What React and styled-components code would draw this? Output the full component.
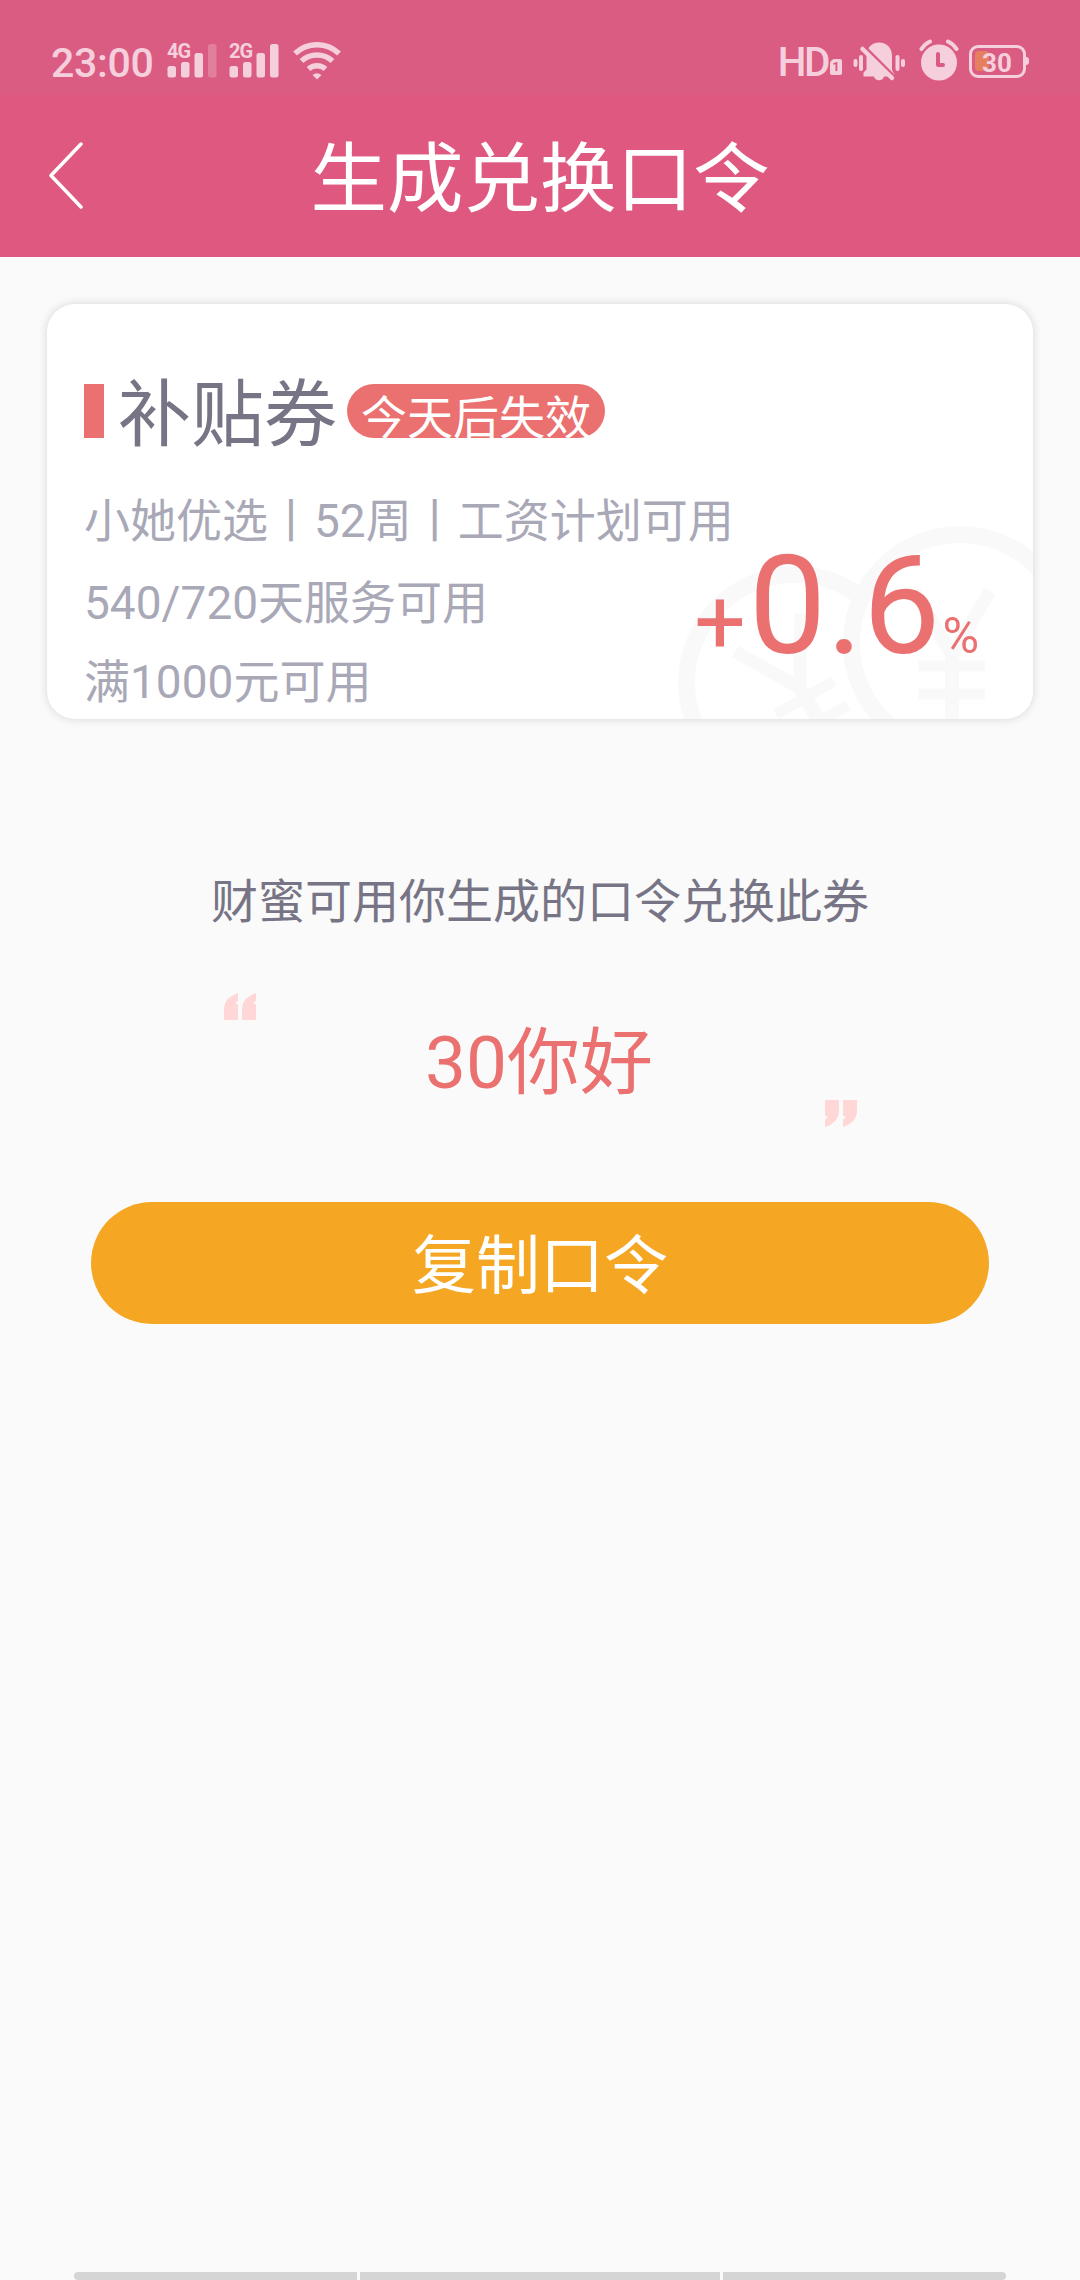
import React from 'react'

import styled, { createGlobalStyle } from 'styled-components'

const GlobalStyle = createGlobalStyle`
*{
    box-sizing:border-box;
}
body{
    margin:0;
    background:#fafafa;
    font-family:Roboto,"Noto Sans CJK SC",sans-serif;
}
`

const Signal = ({ label, weak }) => (
    <SignalBox>
        <svg width="48" height="36" viewBox="0 0 48 36" fill="#f6cfdd">
            <rect x="0.500" y="24" width="8.500" height="11.500" rx="2.500" />
            <rect x="14" y="20" width="8.500" height="15.500" rx="2.500" />
            <rect x="27.500" y="11" width="8.500" height="24.500" rx="2.500" />
            <rect x="41" y="2" width="8.500" height="33.500" rx="2.500" opacity={weak ? 0.3 : 1} />
        </svg>
        <SignalLabel>{label}</SignalLabel>
    </SignalBox>
)

const Wifi = () => (
    <svg width="48" height="38" viewBox="0 0 48 38" fill="none" stroke="#f6cfdd" strokeWidth="5.500">
        <path d="M2 11.500a32 32 0 0 1 44 0" />
        <path d="M8.500 19a23 23 0 0 1 31 0" />
        <path d="M15.500 27a13 13 0 0 1 17 0" />
        <path d="M19.500 33q4.500-3.500 9 0L24 37.500z" fill="#f6cfdd" stroke="none" />
    </svg>
)

const Muted = () => (
    <svg width="54" height="40" viewBox="0 0 54 40">
        <g fill="#f6cfdd">
            <path d="M27 0.500c8 0 13 5.500 13 13.500v14l3.500 6.500H32a5.200 5.200 0 0 1-10 0H11.500v-4l3-3V14c0-8 5-13.500 12.500-13.500z" />
            <rect x="1.500" y="17" width="4" height="8" rx="2" />
            <rect x="7" y="13" width="4" height="16" rx="2" />
            <rect x="43.500" y="13" width="4" height="16" rx="2" />
            <rect x="49" y="17" width="4" height="8" rx="2" />
        </g>
        <path d="M11 1v5l30 30h5z" fill="#da5c82" />
        <path d="M10.500 7l29.500 29" stroke="#f6cfdd" strokeWidth="4.500" strokeLinecap="round" />
    </svg>
)

const Alarm = () => (
    <svg width="42" height="42" viewBox="0 0 42 42" fill="none" strokeLinecap="round">
        <circle cx="21" cy="23.500" r="18" fill="#f6cfdd" />
        <path d="M20 15v11h5" stroke="#da5c82" strokeWidth="4" strokeLinejoin="round" />
        <path d="M3.500 10q3-5 8.500-7.500M38.500 10q-3-5-8.500-7.500" stroke="#f6cfdd" strokeWidth="4" />
    </svg>
)

// yen sign, drawn around the point where its arms meet
const Yen = () => (
    <>
        <path d="M-38-64L0 0L38-64" strokeWidth="13" />
        <path d="M0-4v80" strokeWidth="14" />
        <path d="M-34 11h67M-34 39h67" strokeWidth="11" />
    </>
)

const Coins = () => (
    <CoinArt width="360" height="200" viewBox="673 519 360 200" fill="none" stroke="#f9f9f9">
        <circle cx="795" cy="683" r="108.500" strokeWidth="17" />
        <g transform="translate(800 688) rotate(-30)">
            <Yen />
        </g>
        <circle cx="960" cy="643" r="108.500" strokeWidth="17" fill="#fff" />
        <g transform="translate(952 655)">
            <Yen />
        </g>
    </CoinArt>
)

const Quote = () => (
    <svg width="33" height="27" viewBox="0 0 33 27" fill="#ffd7d7">
        <path d="M0 27V15Q1 4 14 0v8q-3 1-2 3h2v16z" />
        <path d="M18 27V15Q19 4 32 0v8q-3 1-2 3h2v16z" />
    </svg>
)

const App = () => {
    return (
        <Page>
            <GlobalStyle />
            <StatusBar>
                <Time>23:00</Time>
                <Signal label="4G" weak />
                <Signal label="2G" />
                <Wifi />
                <Spacer />
                <Hd>HD</Hd>
                <Sim>1</Sim>
                <Muted />
                <AlarmBox><Alarm /></AlarmBox>
                <Battery>
                    <Charge />
                    <BatteryText>30</BatteryText>
                </Battery>
                <BatteryTip />
            </StatusBar>
            <Header>
                <Back>
                    <svg width="36" height="68" viewBox="0 0 36 68" fill="none" stroke="#fff" strokeWidth="3.500" strokeLinecap="round" strokeLinejoin="round">
                        <path d="M33 2L3 33.500L33 65" />
                    </svg>
                </Back>
                <Title>生成兑换口令</Title>
            </Header>
            <Card>
                <Coins />
                <CardHead>
                    <Marker />
                    <Name>补贴券</Name>
                    <Badge>今天后失效</Badge>
                </CardHead>
                <CardBody>
                    <Rules>
                        <Rule $h={82}>小她优选丨52周丨工资计划可用</Rule>
                        <Rule $h={82}>540/720天服务可用</Rule>
                        <Rule $h={76}>满1000元可用</Rule>
                    </Rules>
                    <Rate>
                        <Plus>+</Plus>
                        <Value>0.6</Value>
                        <Percent>%</Percent>
                    </Rate>
                </CardBody>
            </Card>
            <Hint>财蜜可用你生成的口令兑换此券</Hint>
            <CodeBox>
                <QuoteRow><Quote /></QuoteRow>
                <Code>30你好</Code>
                <QuoteRow $end><Quote /></QuoteRow>
            </CodeBox>
            <CopyButton>复制口令</CopyButton>
            <NavBar>
                <NavItem $w={283} />
                <NavItem $w={360} />
                <NavItem $w={283} />
            </NavBar>
        </Page>
    )
}

const Page = styled.div`
width:1080px;
height:2280px;
display:flex;
flex-direction:column;
align-items:center;
overflow:hidden;
background:#fafafa;
`
const StatusBar = styled.div`
width:100%;
height:95px;
display:flex;
align-items:flex-start;
padding:42px 51px 0 51px;
background:#da5c82;
color:#f6cfdd;
`
const Time = styled.span`
width:116px;
font-size:41px;
line-height:42px;
font-weight:500;
letter-spacing:-.3px;
`
const SignalBox = styled.div`
position:relative;
width:62px;
height:36px;
svg{
    display:block;
    overflow:visible;
}
&+svg{
    margin-left:2px;
}
`
const SignalLabel = styled.span`
position:absolute;
left:0;
top:1px;
font-size:20px;
line-height:16px;
font-weight:700;
letter-spacing:-1px;
`
const Spacer = styled.div`
flex:1;
`
const Hd = styled.span`
font-size:40.500px;
line-height:41px;
letter-spacing:-2.500px;
font-weight:500;
`
const Sim = styled.span`
width:12px;
height:16px;
margin:17px 10px 0 2px;
border-radius:5px 2px 2px 2px;
background:#f6cfdd;
color:#da5c82;
font-size:13px;
line-height:16px;
font-weight:700;
text-align:center;
`
const AlarmBox = styled.div`
margin:-3px 9px 0 12px;
`
const Battery = styled.div`
position:relative;
width:57px;
height:33px;
margin-top:3px;
border:3px solid #f6cfdd;
border-radius:9px;
`
const Charge = styled.div`
width:14px;
height:20px;
margin:3px;
border-radius:4px;
background:#e57f60;
`
const BatteryText = styled.span`
position:absolute;
left:10px;
top:1px;
font-size:26px;
line-height:28px;
font-weight:700;
`
const BatteryTip = styled.div`
width:3px;
height:8px;
margin-top:15px;
border-radius:0 3px 3px 0;
background:#f6cfdd;
`
const Header = styled.header`
width:100%;
height:162px;
display:grid;
grid-template-columns:120px 1fr 120px;
align-items:center;
background:#df5880;
`
const Back = styled.div`
padding-left:48px;
svg{
    display:block;
}
`
const Title = styled.h1`
margin:0;
padding-top:7px;
text-align:center;
font-size:76.500px;
line-height:90px;
font-weight:400;
color:#fff;
`
const Card = styled.section`
position:relative;
width:986px;
height:415px;
margin-top:47px;
padding:64px 37px 0;
overflow:hidden;
border-radius:28px;
background:#fff;
box-shadow:0 0 10px rgba(0,0,0,.15);
`
const CoinArt = styled.svg`
position:absolute;
right:0;
bottom:0;
`
const CardHead = styled.div`
position:relative;
height:86px;
display:flex;
align-items:center;
`
const Marker = styled.div`
width:20px;
height:54px;
margin-right:14px;
background:#eb7171;
`
const Name = styled.h2`
margin:0;
width:225px;
height:86px;
font-size:73px;
line-height:95px;
font-weight:400;
color:#777585;
`
const Badge = styled.span`
width:258px;
height:54px;
margin-left:4px;
border-radius:27px;
background:#eb7171;
color:#fff;
text-align:center;
font-size:46px;
line-height:68px;
`
const CardBody = styled.div`
position:relative;
display:flex;
justify-content:space-between;
padding-top:26px;
`
const Rules = styled.div`
width:600px;
flex:none;
white-space:nowrap;
`
const Rule = styled.p`
margin:0;
font-size:46px;
line-height:${p => p.$h}px;
color:#a9a8b7;
`
const Rate = styled.div`
display:flex;
align-items:baseline;
height:160px;
padding-top:56px;
margin-right:17px;
line-height:140px;
color:#eb7171;
`
const Plus = styled.span`
margin-right:3px;
font-size:91px;
`
const Value = styled.span`
font-size:138px;
`
const Percent = styled.span`
margin-left:2px;
font-size:50px;
`
const Hint = styled.p`
margin:153px 0 0;
font-size:47px;
line-height:60px;
color:#777585;
`
const CodeBox = styled.div`
width:633px;
margin-top:61px;
`
const QuoteRow = styled.div`
height:27px;
display:flex;
justify-content:${p => (p.$end ? "flex-end" : "flex-start")};
svg{
    transform:${p => (p.$end ? "rotate(180deg)" : "none")};
}
`
const Code = styled.div`
height:80px;
padding-right:2px;
text-align:center;
font-size:73px;
line-height:86px;
color:#eb7171;
`
const CopyButton = styled.button`
width:898px;
height:122px;
margin-top:75px;
padding:0 0 6px;
border:0;
border-radius:61px;
background:#f5a623;
color:#fff;
font-family:inherit;
font-size:64px;
`
const NavBar = styled.nav`
width:932px;
display:flex;
justify-content:space-between;
margin-top:auto;
border-radius:8px;
overflow:hidden;
`
const NavItem = styled.div`
width:${p => p.$w}px;
height:8px;
background:#d5d5d5;
`
export default App
